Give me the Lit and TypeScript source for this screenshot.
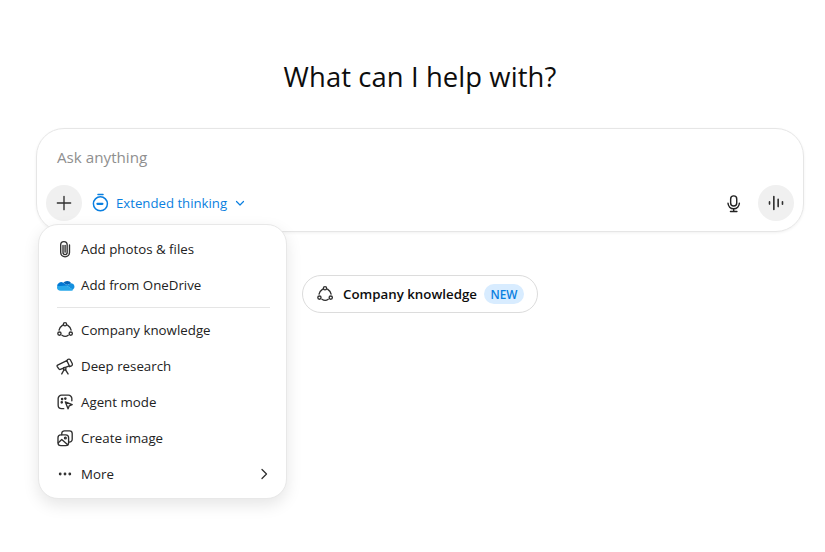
import { LitElement, html, css, svg } from "lit";
import { customElement } from "lit/decorators.js";

const ic = (body: unknown, size = 18) => html`<svg class="ic" width=${size} height=${size} viewBox="0 0 20 20" fill="none" stroke="currentColor" stroke-width="1.5" stroke-linecap="round" stroke-linejoin="round">${body}</svg>`;

const clip = svg`<path d="M7.8 6v8a2.3 2.3 0 0 0 4.6 0V5.4a3.6 3.6 0 0 0-7.2 0v8.4a4.9 4.9 0 0 0 9.8 0V5.6"/><path d="M10.1 6v7.5"/>`;
const know = svg`<circle cx="10" cy="3.6" r="1.8"/><circle cx="3.8" cy="14" r="1.8"/><circle cx="16.4" cy="14" r="1.8"/><path d="M7.4 4.6C5.6 5.8 4 7.6 3.4 10.2M12.8 4.6c1.8 1.2 3.4 3 4 5.6M6.6 15.8c2 1.4 5 1.6 7 0"/>`;
const scope = svg`<path d="M1.8 9l10.2-5 2.8 5.8-10 4a1.4 1.4 0 0 1-1.7-.7L1.4 10.6A1.2 1.2 0 0 1 1.8 9z"/><path d="M12 4l1-1.2a2 2 0 0 1 3 .5l2 4a2 2 0 0 1-1 2.7l-2.2.8"/><circle cx="9.6" cy="13" r="1.5"/><path d="M8.8 14.4L6.4 18.8M10.6 14.2l2.8 4.6"/>`;
const agent = svg`<path d="M8.6 17.4H6.2a3.8 3.8 0 0 1-3.8-3.8V6.2a3.8 3.8 0 0 1 3.8-3.8h7.6a3.8 3.8 0 0 1 3.8 3.8v2.4"/><path d="M10.4 10l7.6 2.9-3.3 1.3-1.3 3.4z"/><circle cx="6.8" cy="6.8" r=".7" fill="currentColor"/><circle cx="10.4" cy="6.2" r=".7" fill="currentColor"/><circle cx="6.4" cy="10.4" r=".7" fill="currentColor"/>`;
const image = svg`<rect x="2.2" y="6.6" width="11.8" height="11.8" rx="3.2"/><path d="M6.4 6.4V5a3 3 0 0 1 3-3h5.6a3 3 0 0 1 3 3v6.4a3 3 0 0 1-3.8 3"/><path d="M2.6 15.2l3.8-3.6 6.6 6"/><circle cx="10.4" cy="10" r="1"/>`;

@customElement("app-root")
export class AppRoot extends LitElement {
  static styles = css`
    :host { display: block; position: relative; height: 552px; background: #fff; overflow: hidden;
      font-family: "Open Sans", "Noto Sans", sans-serif; color: #0d0d0d; }
    .ic { display: block; flex: none; }
    h1 { margin: 0 0 0 36px; width: 768px; padding-top: 59px; height: 69px; line-height: 36px; font-size: 27.4px; font-weight: 400; text-align: center; letter-spacing: .1px; }
    .composer { margin-left: 36px; width: 768px; height: 104px; box-sizing: border-box; border: 1px solid #e6e6e6; border-radius: 28px;
      box-shadow: 0 1px 3px rgba(0,0,0,.06); padding: 17px 9px 10px; display: flex; flex-direction: column; justify-content: space-between; }
    .ph { padding-left: 11px; font-size: 15.2px; line-height: 22px; color: #8f8f8f; }
    .tools { display: flex; align-items: center; }
    .round { width: 36px; height: 36px; border-radius: 50%; background: #f0f0f0; display: flex; align-items: center; justify-content: center; color: #303030; }
    .think { margin-left: 8px; display: flex; align-items: center; color: #0a7fe0; font-size: 13.2px; }
    .think span { margin-left: 6px; }
    .think .chev { margin-left: 7px; }
    .right { margin-left: auto; display: flex; align-items: center; gap: 6px; }
    .mic { width: 36px; margin-right: 1px; display: flex; justify-content: center; color: #222; }
    .chips { display: flex; padding: 43px 0 0 302px; }
    .chip { height: 38px; box-sizing: border-box; border: 1px solid #dcdcdc; border-radius: 19px; display: flex; align-items: center; padding: 0 13px 0 13px; font-size: 13.3px; font-weight: 600; }
    .chip .ic { color: #303030; margin-right: 9px; }
    .new { margin-left: 7px; height: 20px; padding: 0 6.5px; border-radius: 10px; background: #d8ecff; color: #0a7fe0; font-size: 11.8px; font-weight: 600; line-height: 20px; }
    .menu { position: absolute; left: 38px; top: 224px; width: 249px; height: 275px; box-sizing: border-box; background: #fff; border: 1px solid #e8e8e8; border-radius: 20px;
      box-shadow: 0 6px 16px rgba(0,0,0,.1); padding: 6px 16px 5px 18px; }
    .row { height: 36px; display: flex; align-items: center; font-size: 13.3px; color: #222; }
    .row .slot { width: 18px; margin: 0 7px 0 -1px; display: flex; justify-content: center; color: #303030; }
    .sep { height: 1px; background: #e5e5e5; margin: 4px 0; }
    .more { margin-left: auto; margin-right: -1px; color: #303030; }
  `;

  row(icon: unknown, label: string) {
    return html`<div class="row"><span class="slot">${icon}</span>${label}</div>`;
  }

  render() {
    return html`
      <h1>What can I help with?</h1>
      <div class="composer">
        <div class="ph">Ask anything</div>
        <div class="tools">
          <div class="round">${ic(svg`<path d="M10 2.6v14.8M2.6 10h14.8"/>`, 18)}</div>
          <div class="think">
            ${ic(svg`<circle cx="10.4" cy="10.8" r="7"/><path d="M8 1.6h5"/><path d="M7.4 10.8h5" stroke-width="2.2"/>`, 20)}
            <span>Extended thinking</span>
            ${html`<svg class="ic chev" width="12" height="12" viewBox="0 0 12 12" fill="none" stroke="currentColor" stroke-width="1.2" stroke-linecap="round" stroke-linejoin="round"><path d="M2.5 4.5L6 8l3.5-3.5"/></svg>`}
          </div>
          <div class="right">
            <div class="mic">${ic(svg`<rect x="7" y="2" width="6.4" height="10.6" rx="3.2"/><path d="M4.2 9.6a6 6 0 0 0 12 0M10.2 15.6v2.8M6.8 18.4h6.8"/>`, 19)}</div>
            <div class="round">${html`<svg class="ic" width="18" height="18" viewBox="0 0 20 20" fill="none" stroke="currentColor" stroke-width="1.8" stroke-linecap="round"><path d="M2.8 8.8v2.4M7.6 2.8v14.4M12.4 6v8M17.2 8.6v2.8"/></svg>`}</div>
          </div>
        </div>
      </div>
      <div class="chips">
        <div class="chip">${ic(know)}Company knowledge<span class="new">NEW</span></div>
      </div>
      <div class="menu">
        ${this.row(ic(clip), "Add photos & files")}
        ${this.row(html`<svg class="ic" width="19" height="13" viewBox="0 0 18 12"><path fill="#0364b8" d="M6.9 3.4l3.6 2.1 4-1.7A5 5 0 0 0 6.9 3.4z"/><path fill="#0078d4" d="M6.9 3.3A4 4 0 0 0 1 6.8l4.9 2 5-2.8z"/><path fill="#1490df" d="M14.5 3.8h-.4l-4.1 2.3 5.8 3.9a3.3 3.3 0 0 0-1.3-6.2z"/><path fill="#28a8ea" d="M1 6.8l-.1.6A3.6 3.6 0 0 0 4.5 11h10.1a3 3 0 0 0 1.8-1l-6.4-4.1z"/></svg>`, "Add from OneDrive")}
        <div class="sep"></div>
        ${this.row(ic(know), "Company knowledge")}
        ${this.row(ic(scope), "Deep research")}
        ${this.row(ic(agent), "Agent mode")}
        ${this.row(ic(image), "Create image")}
        <div class="row"><span class="slot">${ic(svg`<circle cx="4" cy="10" r="1" fill="currentColor"/><circle cx="10" cy="10" r="1" fill="currentColor"/><circle cx="16" cy="10" r="1" fill="currentColor"/>`, 16)}</span>More
          <svg class="ic more" width="14" height="14" viewBox="0 0 14 14" fill="none" stroke="currentColor" stroke-width="1.3" stroke-linecap="round" stroke-linejoin="round"><path d="M5 2.5L9.5 7 5 11.5"/></svg>
        </div>
      </div>
    `;
  }
}
